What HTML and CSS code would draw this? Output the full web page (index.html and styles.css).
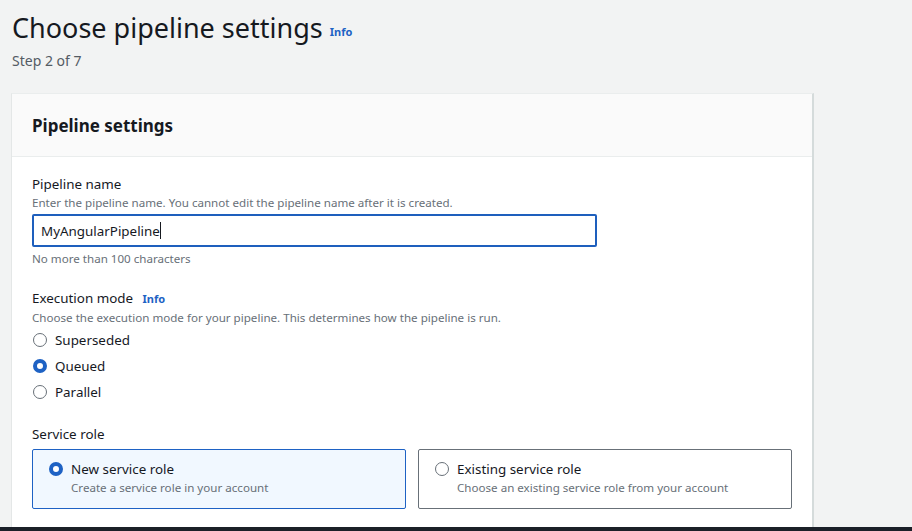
FILE: index.html
```html
<!DOCTYPE html>
<html>
<head>
<meta charset="utf-8">
<link rel="stylesheet" href="styles.css">
</head>
<body>
<div class="page">
  <header class="page-header">
    <h1 class="title">Choose pipeline settings <a class="info" href="#">Info</a></h1>
    <div class="step">Step 2 of 7</div>
  </header>
  <section class="card">
    <div class="card-header"><h2>Pipeline settings</h2></div>
    <div class="card-body">
      <div class="field">
        <div class="label">Pipeline name</div>
        <div class="desc">Enter the pipeline name. You cannot edit the pipeline name after it is created.</div>
        <div class="input"><span>MyAngularPipeline</span><span class="caret"></span></div>
        <div class="constraint">No more than 100 characters</div>
      </div>
      <div class="field field-radios">
        <div class="label">Execution mode <a class="info" href="#">Info</a></div>
        <div class="desc">Choose the execution mode for your pipeline. This determines how the pipeline is run.</div>
        <div class="radios">
          <div class="radio"><span class="dot"></span>Superseded</div>
          <div class="radio"><span class="dot checked"></span>Queued</div>
          <div class="radio"><span class="dot"></span>Parallel</div>
        </div>
      </div>
      <div class="field">
        <div class="label">Service role</div>
        <div class="tiles">
          <div class="tile selected">
            <span class="dot checked"></span>
            <div>
              <div class="tile-title">New service role</div>
              <div class="tile-desc">Create a service role in your account</div>
            </div>
          </div>
          <div class="tile">
            <span class="dot"></span>
            <div>
              <div class="tile-title">Existing service role</div>
              <div class="tile-desc">Choose an existing service role from your account</div>
            </div>
          </div>
        </div>
      </div>
    </div>
  </section>
</div>
<div class="footer-bar"></div>
</body>
</html>
```

FILE: styles.css
```css
html, body {
  margin: 0;
  padding: 0;
  height: 100%;
  overflow: hidden;
}
body {
  background: #f2f3f3;
  font-family: "Noto Sans", "Open Sans", sans-serif;
  color: #16191f;
  position: relative;
}
.page {
  padding: 0 0 0 11px;
}
.page-header {
  padding: 8px 0 0 1px;
  height: 93px;
  box-sizing: border-box;
}
.title {
  margin: 0;
  font-size: 27px;
  font-weight: 400;
  line-height: 40px;
  color: #16191f;
}
.info {
  font-size: 11px;
  font-weight: 700;
  color: #1e62c4;
  text-decoration: none;
  vertical-align: 2px;
}
.step {
  font-size: 14px;
  line-height: 20px;
  color: #545b64;
  margin-top: -1px;
}
.card {
  width: 800px;
  background: #fff;
  border-top: 1px solid #eaeded;
  border-left: 1px solid #e4e7e7;
  border-right: 2px solid #d5dbdb;
  height: 460px;
}
.card-header {
  background: #fafafa;
  border-bottom: 1px solid #eaeded;
  height: 62px;
  padding: 0 20px;
  display: flex;
  align-items: center;
}
.card-header h2 {
  margin: 0;
  font-size: 17px;
  font-weight: 700;
  color: #16191f;
}
.card-body {
  padding: 17px 20px 0 20px;
}
.field {
  margin-bottom: 20px;
}
.field-radios {
  margin-bottom: 19px;
}
.label {
  font-size: 13.4px;
  line-height: 20px;
  color: #16191f;
}
.label .info {
  margin-left: 6px;
  vertical-align: 0;
}
.desc {
  font-size: 11.6px;
  line-height: 18px;
  color: #687078;
}
.input {
  margin-top: 2px;
  width: 565px;
  height: 33px;
  box-sizing: border-box;
  border: 2px solid #1e5fbd;
  border-radius: 2px;
  padding: 0 7px;
  display: flex;
  align-items: center;
  font-size: 13.4px;
  color: #16191f;
}
.caret {
  display: inline-block;
  width: 1px;
  height: 17px;
  background: #16191f;
}
.constraint {
  font-size: 11.6px;
  line-height: 18px;
  color: #687078;
  margin-top: 3px;
}
.radio {
  display: flex;
  align-items: center;
  height: 26px;
  font-size: 13.4px;
  color: #16191f;
  padding-left: 1px;
}
.dot {
  width: 14px;
  height: 14px;
  box-sizing: border-box;
  border: 1px solid #687078;
  border-radius: 50%;
  margin-right: 8px;
  flex: none;
  background: #fff;
}
.dot.checked {
  border: 4px solid #1e62c4;
}
.tiles {
  display: grid;
  grid-template-columns: 1fr 1fr;
  gap: 12px;
  margin-top: 5px;
}
.tile {
  display: flex;
  align-items: flex-start;
  height: 60px;
  box-sizing: border-box;
  border: 1px solid #687078;
  border-radius: 2px;
  padding: 9px 16px;
}
.tile .dot {
  margin-top: 3px;
}
.tile.selected {
  background: #f1f8ff;
  border-color: #1e62c4;
}
.tile-title {
  font-size: 13.4px;
  line-height: 20px;
}
.tile-desc {
  font-size: 11.6px;
  line-height: 18px;
  color: #687078;
}
.footer-bar {
  position: absolute;
  left: 0;
  right: 0;
  bottom: 0;
  height: 4px;
  background: #1b2028;
}
```
